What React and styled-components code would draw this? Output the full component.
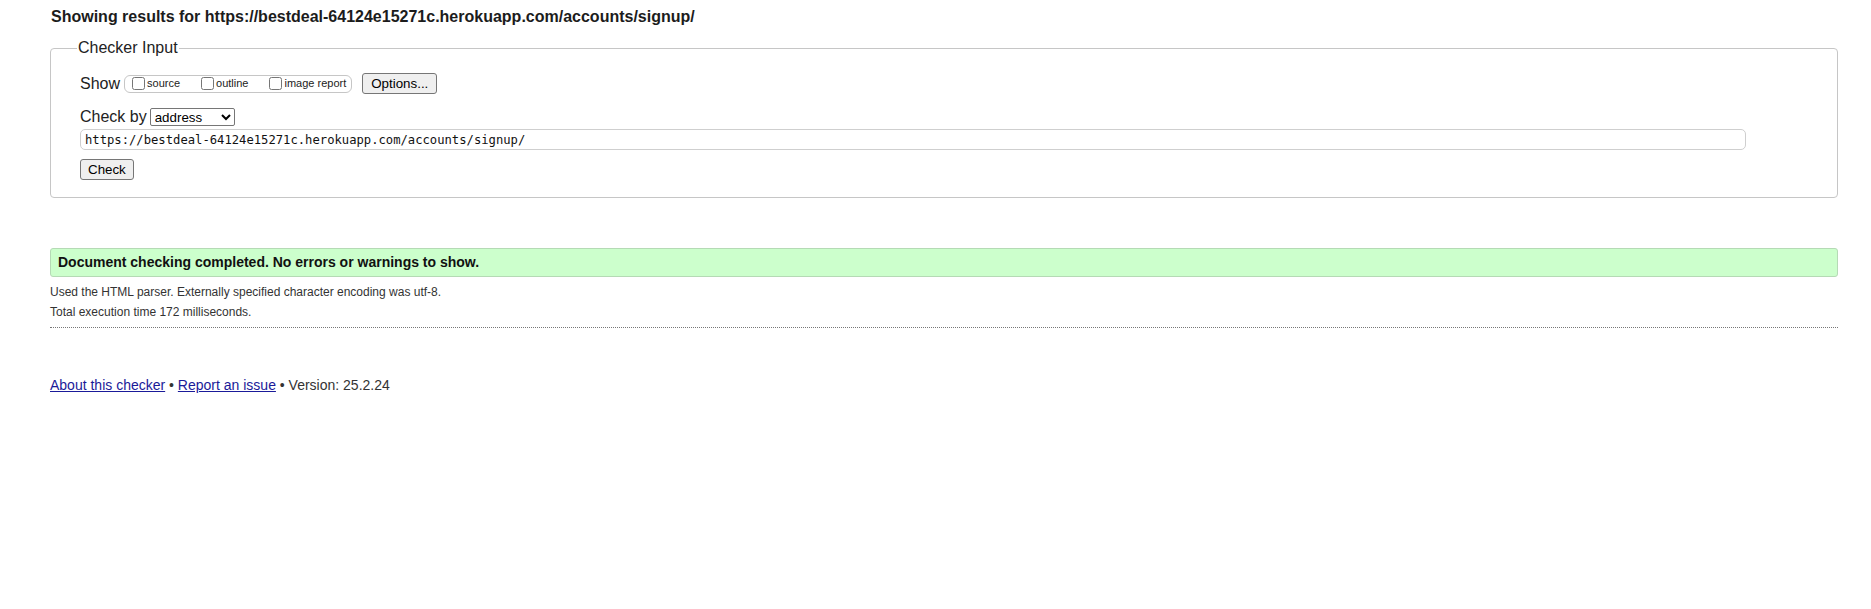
import React, { useState } from 'react'
import styled, { createGlobalStyle } from 'styled-components'

const GlobalStyle = createGlobalStyle`
  html, body {
    margin: 0;
    padding: 0;
    background: #fff;
  }
  body {
    font-family: "Liberation Sans", Arial, sans-serif;
    color: #222;
  }
`

export const Page = styled.div`
  padding: 8px 33px 40px 50px;
`

export const Heading = styled.h2`
  margin: 0 0 0 1px;
  font-size: 16px;
  line-height: 18px;
  font-weight: bold;
  color: #1c1c1c;
`

export const Panel = styled.fieldset`
  margin: 13px 0 0;
  min-width: 0;
  padding: 16px 29px 17px 29px;
  border: 1px solid #c6c6c6;
  border-radius: 4px;
`

export const Legend = styled.legend`
  margin-left: -3px;
  padding: 0 1px;
  font-size: 16px;
  line-height: 18px;
  color: #222;
`

export const Row = styled.div`
  display: flex;
  align-items: center;
  height: ${(p) => p.h || 18}px;
  margin-top: ${(p) => p.mt || 0}px;
`

export const Label = styled.span`
  font-size: 16px;
  line-height: 18px;
  margin-right: ${(p) => p.mr || 4}px;
  white-space: nowrap;
`

export const CheckGroup = styled.span`
  display: inline-flex;
  align-items: center;
  box-sizing: border-box;
  height: 18px;
  padding: 0 5px 0 3px;
  border: 1px solid #c6c6c6;
  border-radius: 6px;
`

export const CheckItem = styled.label`
  display: inline-flex;
  align-items: center;
  font-size: 11px;
  line-height: 13px;
  margin-right: ${(p) => (p.last ? 0 : 17)}px;
  white-space: nowrap;

  input {
    width: 13px;
    height: 13px;
    margin: 0 2px 0 4px;
  }
`

export const Button = styled.button`
  box-sizing: border-box;
  height: ${(p) => p.h || 21}px;
  margin-left: ${(p) => p.ml || 0}px;
  padding: 0 ${(p) => p.px || 7}px;
  font-family: "Liberation Sans", Arial, sans-serif;
  font-size: 13.33px;
  color: #000;
  background: #efefef;
  border: 1px solid #767676;
  border-radius: 3px;
  cursor: pointer;
`

export const Select = styled.select`
  box-sizing: border-box;
  width: 85px;
  height: 18px;
  padding: 0;
  font-family: "Liberation Sans", Arial, sans-serif;
  font-size: 13.33px;
  color: #000;
  border: 1px solid #767676;
  border-radius: 2px;
  background: #fff;
`

export const UrlInput = styled.input`
  box-sizing: border-box;
  width: calc(100% - 62px);
  height: 21px;
  padding: 0 4px;
  font-family: "DejaVu Sans Mono", "Liberation Mono", monospace;
  font-size: 12.2px;
  color: #111;
  border: 1px solid #cfcfcf;
  border-radius: 5px;
  outline: none;
`

export const Success = styled.div`
  margin-top: 50px;
  padding: 5px 7px;
  font-size: 14px;
  line-height: 17px;
  font-weight: bold;
  color: #111;
  background: #ccffcc;
  border: 1px solid #b5dab5;
  border-radius: 3px;
`

export const Details = styled.div`
  margin-top: 5px;
  padding-bottom: 5px;
  border-bottom: 1px dotted #777;
`

export const Note = styled.p`
  margin: 0;
  font-size: 12px;
  line-height: 20px;
  color: #333;
`

export const Footer = styled.p`
  margin: 49px 0 0;
  font-size: 14px;
  line-height: 16px;
  color: #333;

  a {
    color: #1a1a99;
    text-decoration: underline;
  }
`

const url = 'https://bestdeal-64124e15271c.herokuapp.com/accounts/signup/'

function App() {
  const [doc, setDoc] = useState(url)
  const [checkBy, setCheckBy] = useState('address')

  return (
    <>
      <GlobalStyle />
      <Page>
        <Heading>Showing results for {url}</Heading>

        <Panel>
          <Legend>Checker Input</Legend>

          <Row h={21}>
            <Label>Show</Label>
            <CheckGroup>
              <CheckItem><input type="checkbox" />source</CheckItem>
              <CheckItem><input type="checkbox" />outline</CheckItem>
              <CheckItem last><input type="checkbox" />image report</CheckItem>
            </CheckGroup>
            <Button ml={10} px={8}>Options...</Button>
          </Row>

          <Row mt={14}>
            <Label mr={3}>Check by</Label>
            <Select value={checkBy} onChange={(e) => setCheckBy(e.target.value)}>
              <option value="address">address</option>
              <option value="file">file upload</option>
              <option value="text">text input</option>
            </Select>
          </Row>

          <Row h={21} mt={3}>
            <UrlInput value={doc} onChange={(e) => setDoc(e.target.value)} />
          </Row>

          <Row h={21} mt={9}>
            <Button px={7}>Check</Button>
          </Row>
        </Panel>

        <Success>Document checking completed. No errors or warnings to show.</Success>

        <Details>
          <Note>Used the HTML parser. Externally specified character encoding was utf-8.</Note>
          <Note>Total execution time 172 milliseconds.</Note>
        </Details>

        <Footer>
          <a href="#about">About this checker</a> • <a href="#issue">Report an issue</a> • Version: 25.2.24
        </Footer>
      </Page>
    </>
  )
}

export default App
